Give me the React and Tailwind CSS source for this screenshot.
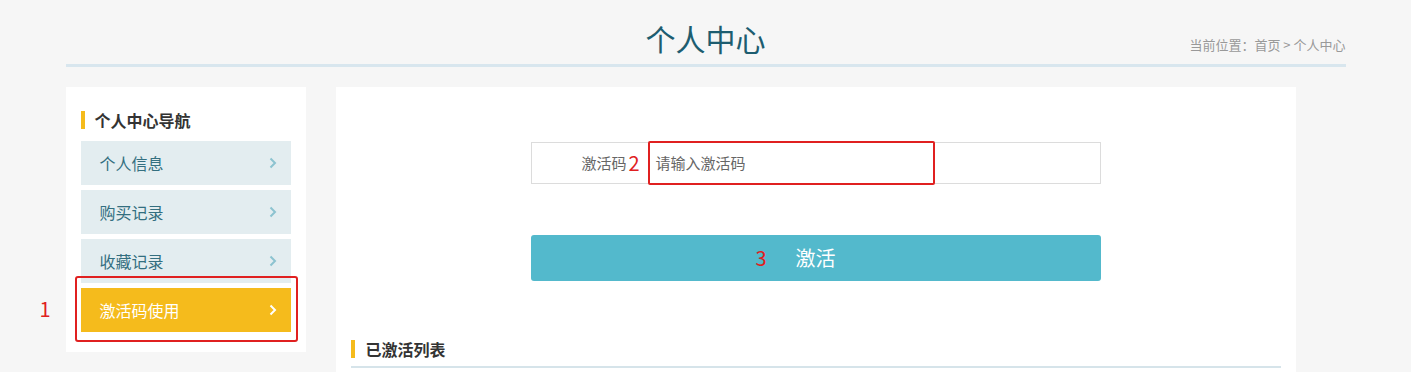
import React from "react";

const navItems = ["个人信息", "购买记录", "收藏记录", "激活码使用"];

function Chevron({ className }) {
  return (
    <svg width="8" height="12" viewBox="0 0 8 12" className={className}>
      <path d="M1.5 1.5L6 6l-4.5 4.5" fill="none" stroke="currentColor" strokeWidth="2" />
    </svg>
  );
}

export default function App() {
  return (
    <div
      className="min-h-[372px] bg-[#f6f6f6]"
      style={{ fontFamily: '"Noto Sans CJK SC", "Noto Sans", sans-serif' }}
    >
      <div className="mx-auto w-[1280px]">
        {/* header */}
        <div className="relative flex h-[67px] items-end justify-center border-b-[3px] border-[#d8e6ee] pb-[6px]">
          <h1 className="text-[30px] leading-[40px] text-[#1d5d70]">个人中心</h1>
          <div className="absolute right-0 bottom-[10px] text-[13px] leading-[18px] text-[#999]">
            当前位置：首页 &gt; 个人中心
          </div>
        </div>

        <div className="mt-[20px] flex items-start gap-[30px]">
          {/* sidebar */}
          <div className="w-[240px] bg-white px-[15px] pt-[24px] pb-[20px]">
            <div className="flex h-[18px] items-center border-l-[4px] border-[#f5bb1c] pl-[10px] text-[16px] font-bold text-[#333]">
              个人中心导航
            </div>
            <div className="mt-[12px] flex flex-col gap-[5px]">
              {navItems.map((item, i) => {
                const active = i === navItems.length - 1;
                return (
                  <div key={item} className="relative">
                    <div
                      className={
                        active
                          ? "flex h-[44px] items-center justify-between bg-[#f5bb1c] pr-[14px] pl-[19px] text-[16px] text-white"
                          : "flex h-[44px] items-center justify-between bg-[#e3edf0] pr-[14px] pl-[19px] text-[16px] text-[#336f80]"
                      }
                    >
                      <span>{item}</span>
                      <Chevron className={active ? "text-white" : "text-[#8cc3d0]"} />
                    </div>
                    {active && (
                      <>
                        <div className="absolute -top-[12px] -right-[7px] -bottom-[10px] -left-[6px] rounded-[3px] border-2 border-[#e02020]" />
                        <div className="absolute top-[9px] -left-[41px] text-[20px] leading-[24px] text-[#e02020]">
                          1
                        </div>
                      </>
                    )}
                  </div>
                );
              })}
            </div>
          </div>

          {/* main */}
          <div className="h-[300px] w-[960px] bg-white px-[15px] pt-[55px]">
            <div className="mx-auto flex h-[42px] w-[570px] items-center border border-[#dcdcdc]">
              <div className="flex w-[116px] items-center justify-end pr-[8px] text-[15px] text-[#666]">
                <span>激活码</span>
                <span className="ml-[2px] text-[20px] leading-[20px] text-[#e02020]">2</span>
              </div>
              <div className="relative flex h-full flex-1 items-center pl-[8px] text-[15px] text-[#666]">
                请输入激活码
                <div className="absolute -top-[2px] left-0 h-[44px] w-[287px] rounded-[2px] border-2 border-[#e02020]" />
              </div>
            </div>

            <div className="relative mx-auto mt-[51px] flex h-[46px] w-[570px] items-center justify-center rounded-[3px] bg-[#53b9cc] text-[20px] text-white">
              激活
              <span className="absolute left-[225px] text-[20px] text-[#e02020]">3</span>
            </div>

            <div className="mt-[59px] flex h-[18px] items-center border-l-[4px] border-[#f5bb1c] pl-[11px] text-[16px] font-bold text-[#333]">
              已激活列表
            </div>
            <div className="mt-[8px] h-[2px] bg-[#d6e4ea]" />
          </div>
        </div>
      </div>
    </div>
  );
}
